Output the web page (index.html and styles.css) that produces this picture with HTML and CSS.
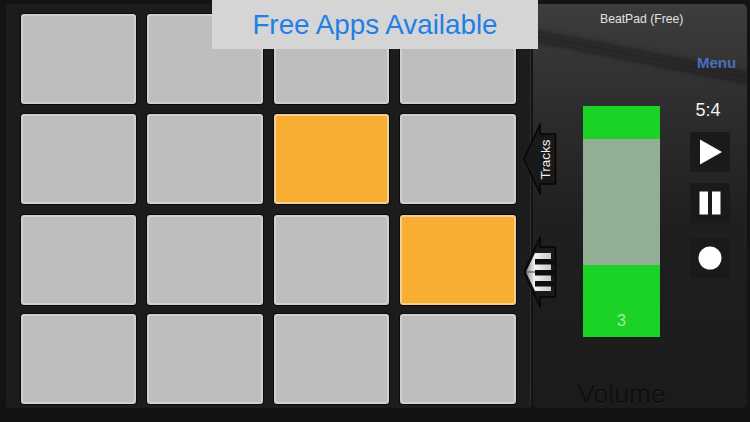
FILE: index.html
```html
<!DOCTYPE html>
<html lang="en">
<head>
<meta charset="utf-8">
<title>BeatPad (Free)</title>
<link rel="stylesheet" href="styles.css">
</head>
<body>
<main class="app">
  <section class="board">
    <div class="pads">
      <div class="pad"></div><div class="pad"></div><div class="pad"></div><div class="pad"></div>
      <div class="pad"></div><div class="pad"></div><div class="pad on"></div><div class="pad"></div>
      <div class="pad"></div><div class="pad"></div><div class="pad"></div><div class="pad on"></div>
      <div class="pad"></div><div class="pad"></div><div class="pad"></div><div class="pad"></div>
    </div>
  </section>
  <aside class="side">
    <svg class="streak" viewBox="0 0 214 403" aria-hidden="true">
      <defs><filter id="soft" x="-10%" y="-100%" width="120%" height="300%"><feGaussianBlur stdDeviation="3.500"/></filter></defs>
      <path d="M-6 30 L220 75" fill="none" stroke="#0c0c0c" stroke-width="8" stroke-opacity=".65" filter="url(#soft)"/>
    </svg>
    <h1 class="title">BeatPad (Free)</h1>
    <div class="menu">Menu</div>
    <div class="controls">
      <div class="meter-col">
        <div class="meter">
          <div class="meter-top"></div>
          <div class="meter-mid"></div>
          <div class="meter-low">3</div>
        </div>
        <div class="volume">Volume</div>
      </div>
      <div class="transport">
        <div class="time">5:4</div>
        <div class="btn">
          <svg class="ico" viewBox="0 0 40 40"><path d="M10 7.500 L32 20 L10 32.500Z" fill="#fff"/></svg>
        </div>
        <div class="btn">
          <svg class="ico" viewBox="0 0 40 40"><path d="M9.500 8.500h8.500v23h-8.500zM22 8.500h8.500v23H22z" fill="#fff"/></svg>
        </div>
        <div class="btn rec">
          <svg class="ico" viewBox="0 0 40 40"><circle cx="20" cy="20" r="11.500" fill="#fff"/></svg>
        </div>
      </div>
    </div>
  </aside>
  <svg class="tab tab-tracks" viewBox="0 0 34 72" aria-label="Tracks">
    <path d="M1 36 L17 1 V11 H32.500 V61 H17 V71Z" fill="#191919" stroke="#050505" stroke-width="1.500" stroke-linejoin="round"/>
    <text class="tab-text" transform="translate(27 56.500) rotate(-90)">Tracks</text>
  </svg>
  <svg class="tab tab-keys" viewBox="0 0 34 72" aria-label="Piano">
    <defs>
      <linearGradient id="keyShade" x1="0" y1="0" x2="1" y2="0">
        <stop offset="0" stop-color="#8d8d8d"/><stop offset=".35" stop-color="#f2f2f2"/><stop offset="1" stop-color="#c9c9c9"/>
      </linearGradient>
    </defs>
    <path d="M1 36 L17 1 V11 H32.500 V61 H17 V71Z" fill="#191919" stroke="#050505" stroke-width="1.500" stroke-linejoin="round"/>
    <path d="M3 36 L12 17 H28 V55 H12Z" fill="url(#keyShade)"/>
    <path d="M12 23h19v5.500H12zM12 34h19v5.500H12zM12 45h19v5.500H12z" fill="#0d0d0d"/>
    <path d="M3 36H12" stroke="#444" stroke-width="1"/>
  </svg>
  <div class="banner">Free Apps Available</div>
</main>
</body>
</html>
```
FILE: styles.css
```css
* { box-sizing: border-box; margin: 0; padding: 0; }

html, body {
  width: 750px;
  height: 422px;
  overflow: hidden;
  background: #131313;
  font-family: "Liberation Sans", Arial, sans-serif;
}

.app {
  position: relative;
  display: flex;
  width: 750px;
  height: 422px;
  padding: 4px 3px 14px 6px;
  gap: 2px;
}

.board {
  width: 525px;
  padding: 9.500px 0 0 14.500px;
  background: #1c1c1c;
  border-right: 1.500px solid #2f2f2f;
  border-radius: 3px;
}

.pads {
  display: grid;
  grid-template-columns: repeat(4, 115.500px);
  grid-template-rows: 100.500px 101px 99px 90px;
  column-gap: 11px;
  align-items: start;
}

.pad {
  height: 90px;
  background: #bebebe;
  border: 2px solid #d0d0d0;
  border-radius: 3px;
  box-shadow: 0 0 0 1px #0a0a0a;
}

.pad.on {
  background: #f8ad33;
  border-color: #f3cf94;
}

.side {
  position: relative;
  flex: 1;
  padding-top: 8px;
  background: linear-gradient(180deg, #3d3d3d 0%, #2b2b2b 30%, #1f1f1f 55%, #1b1b1b 100%);
  border-radius: 5px;
  overflow: hidden;
}

.streak {
  position: absolute;
  left: 0;
  top: 0;
  width: 214px;
  height: 403px;
}

.title {
  position: relative;
  padding-left: 67px;
  font-size: 12.200px;
  font-weight: 400;
  line-height: 14px;
  color: #e2e2e2;
}

.menu {
  position: relative;
  margin-top: 29px;
  padding-left: 164px;
  font-size: 15px;
  font-weight: 700;
  line-height: 16px;
  color: #4a6fbb;
}

.controls {
  position: relative;
  display: flex;
  padding-left: 50px;
  margin-top: 16px;
}

.meter-col {
  width: 107px;
  padding-top: 19px;
}

.meter {
  width: 77px;
  height: 231px;
  display: flex;
  flex-direction: column;
}

.meter-top { height: 33px; background: #1ad326; }
.meter-mid { height: 126px; background: #92af95; }

.meter-low {
  flex: 1;
  padding-top: 47px;
  text-align: center;
  font-size: 16px;
  line-height: 18px;
  color: #a8e8ac;
  background: #1ad326;
}

.volume {
  margin-top: 43px;
  width: 77px;
  display: flex;
  justify-content: center;
  font-size: 26.500px;
  line-height: 28px;
  white-space: nowrap;
  color: #0f0f0f;
  text-shadow: 0 1px 1px #262626;
}

.transport {
  display: flex;
  flex-direction: column;
  width: 40px;
}

.time {
  height: 45px;
  padding-top: 13px;
  margin-left: -4px;
  text-align: center;
  font-size: 18px;
  line-height: 20px;
  color: #f2f2f2;
}

.btn {
  width: 40px;
  height: 40px;
  margin-bottom: 11px;
  background: #1a1a1a;
  border-radius: 3px;
}

.btn.rec { margin-top: 4px; }

.ico { display: block; width: 40px; height: 40px; }

.tab {
  position: absolute;
  left: 523px;
  width: 34px;
  height: 72px;
}

.tab-tracks { top: 123px; }
.tab-keys { top: 236px; }

.tab-text {
  font-family: "Liberation Sans", Arial, sans-serif;
  font-size: 13.500px;
  fill: #f0f0f0;
}

.banner {
  position: absolute;
  left: 212px;
  top: 0;
  width: 326px;
  height: 49px;
  padding-top: 9px;
  text-align: center;
  font-size: 27.800px;
  line-height: 32px;
  color: #1f7fe8;
  background: #d5d5d5;
}
```
